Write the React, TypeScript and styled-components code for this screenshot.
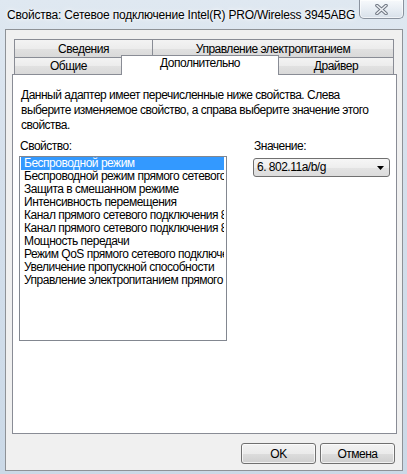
import React from 'react';
import styled, { createGlobalStyle } from 'styled-components';

const GlobalStyle = createGlobalStyle`
  html, body {
    margin: 0;
    padding: 0;
  }

  body {
    width: 407px;
    height: 474px;
    overflow: hidden;
    font-family: "Liberation Sans", Arial, sans-serif;
    font-size: 12px;
    letter-spacing: -0.5px;
    color: #000;
  }

  * {
    box-sizing: border-box;
  }
`;

const properties = [
  'Беспроводной режим',
  'Беспроводной режим прямого сетевого подключения',
  'Защита в смешанном режиме',
  'Интенсивность перемещения',
  'Канал прямого сетевого подключения 802.11a',
  'Канал прямого сетевого подключения 802.11b/g',
  'Мощность передачи',
  'Режим QoS прямого сетевого подключения',
  'Увеличение пропускной способности',
  'Управление электропитанием прямого сетевого подключения',
];

export default function App(): JSX.Element {
  return (
    <>
      <GlobalStyle />
      <Frame>
        <TitleBar>
          <Title>Свойства: Сетевое подключение Intel(R) PRO/Wireless 3945ABG</Title>
          <CloseButton aria-label="Закрыть">
            <svg width="13" height="11" viewBox="0 0 13 11">
              <path d="M2 1.5 L11 9.5 M11 1.5 L2 9.5" stroke="#6f7682" strokeWidth="3.6" strokeLinecap="round" fill="none" />
              <path d="M2 1.5 L11 9.5 M11 1.5 L2 9.5" stroke="#eef1f5" strokeWidth="1.6" strokeLinecap="round" fill="none" />
            </svg>
          </CloseButton>
        </TitleBar>
        <Client>
          <TabStrip>
            <TabRow>
              <Tab $width={139} $pad={2}>Сведения</Tab>
              <Tab $width={242} $pad={2}>Управление электропитанием</Tab>
            </TabRow>
            <TabRow>
              <Tab $width={109} $pad={1}>Общие</Tab>
              <ActiveTab>Дополнительно</ActiveTab>
              <Tab $width={116} $pad={1}>Драйвер</Tab>
            </TabRow>
          </TabStrip>
          <Panel>
            <Description>
              Данный адаптер имеет перечисленные ниже свойства. Слева
              <br />
              выберите изменяемое свойство, а справа выберите значение этого
              <br />
              свойства.
            </Description>
            <Columns>
              <PropertyColumn>
                <FieldLabel>Свойство:</FieldLabel>
                <ListBox>
                  {properties.map((name, i) => (
                    <ListItem key={name} $selected={i === 0}>
                      {name}
                    </ListItem>
                  ))}
                </ListBox>
              </PropertyColumn>
              <ValueColumn>
                <FieldLabel>Значение:</FieldLabel>
                <Combo>
                  <span>6. 802.11a/b/g</span>
                  <svg width="7" height="4" viewBox="0 0 7 4">
                    <path d="M0 0 H7 L3.5 4 Z" fill="#000" />
                  </svg>
                </Combo>
              </ValueColumn>
            </Columns>
          </Panel>
          <ButtonRow>
            <DialogButton>OK</DialogButton>
            <DialogButton>Отмена</DialogButton>
          </ButtonRow>
        </Client>
      </Frame>
    </>
  );
}

const Frame = styled.div`
  width: 407px;
  height: 474px;
  display: flex;
  flex-direction: column;
  padding: 0 4px 3px 5px;
  background: linear-gradient(180deg, #dfe8f1 0%, #d5e0ec 35%, #cbd9e7 100%);
`;

const TitleBar = styled.div`
  height: 29px;
  display: flex;
  align-items: flex-start;
  justify-content: space-between;
  flex-shrink: 0;
`;

const Title = styled.div`
  margin-left: 2px;
  padding-top: 8px;
  line-height: 15px;
  letter-spacing: -0.2px;
  white-space: nowrap;
  text-shadow: 0 0 6px rgba(255, 255, 255, 0.95), 0 0 3px rgba(255, 255, 255, 0.9);
`;

const CloseButton = styled.div`
  width: 45px;
  height: 19px;
  margin-right: -1px;
  display: flex;
  align-items: center;
  justify-content: center;
  border: 1px solid #8a929e;
  border-top: none;
  border-radius: 0 0 5px 5px;
  background: linear-gradient(180deg, rgba(255, 255, 255, 0.75) 0%, rgba(236, 240, 245, 0.7) 50%, rgba(214, 222, 232, 0.75) 100%);
  box-shadow: inset 0 0 0 1px rgba(255, 255, 255, 0.6);
`;

const Client = styled.div`
  flex: 1;
  display: flex;
  flex-direction: column;
  border: 1px solid #8e9297;
  background: #f0f0f0;
  padding: 9px 5px 6px 6px;
`;

const TabStrip = styled.div`
  margin: 0 3px 0 2px;
  display: flex;
  flex-direction: column;
`;

const TabRow = styled.div`
  display: flex;
  align-items: flex-start;
`;

const Tab = styled.div<{ $width: number; $pad: number }>`
  width: ${p => p.$width}px;
  height: ${p => (p.$pad === 2 ? 18 : 17)}px;
  padding-top: ${p => p.$pad}px;
  line-height: 15px;
  text-align: center;
  white-space: nowrap;
  border: 1px solid #898c95;
  border-bottom: none;
  background: linear-gradient(180deg, #f3f3f3 0%, #ececec 50%, #e1e1e1 52%, #d9d9d9 100%);

  & + & {
    margin-left: -1px;
  }
`;

const ActiveTab = styled.div`
  position: relative;
  z-index: 1;
  width: 158px;
  height: 20px;
  margin: -2px 0 -1px -2px;
  line-height: 15px;
  text-align: center;
  white-space: nowrap;
  border: 1px solid #898c95;
  border-bottom: none;
  background: #fff;

  & + ${Tab} {
    margin-left: -1px;
  }
`;

const Panel = styled.div`
  flex: 1;
  border: 1px solid #898c95;
  background: #fff;
  padding: 13px 6px 0 6px;
`;

const Description = styled.p`
  margin: 0 0 0 2px;
  line-height: 15px;
  white-space: nowrap;
`;

const Columns = styled.div`
  display: flex;
  align-items: flex-start;
  margin-top: 6px;
`;

const PropertyColumn = styled.div`
  width: 208px;
  display: flex;
  flex-direction: column;
`;

const ValueColumn = styled.div`
  width: 137px;
  margin-left: 26px;
  display: flex;
  flex-direction: column;
`;

const FieldLabel = styled.div`
  margin-left: 1px;
  line-height: 15px;
`;

const ListBox = styled.div`
  margin-top: 2px;
  height: 185px;
  border: 1px solid #828790;
  padding: 0 2px 0 1px;
  overflow: hidden;
`;

const ListItem = styled.div<{ $selected?: boolean }>`
  height: 13px;
  line-height: 13px;
  padding-left: 3px;
  white-space: nowrap;
  overflow: hidden;
  background: ${p => (p.$selected ? '#3399ff' : 'transparent')};
  color: ${p => (p.$selected ? '#fff' : '#000')};
`;

const Combo = styled.div`
  margin-top: 4px;
  height: 19px;
  display: flex;
  align-items: center;
  justify-content: space-between;
  padding: 0 5px 0 3px;
  line-height: 15px;
  border: 1px solid #707070;
  border-radius: 3px;
  background: linear-gradient(180deg, #f6f6f6 0%, #eeeeee 50%, #e3e3e3 52%, #dcdcdc 100%);
`;

const ButtonRow = styled.div`
  display: flex;
  justify-content: flex-end;
  gap: 4px;
  margin-top: 9px;
  padding-right: 2px;
`;

const DialogButton = styled.button`
  width: 75px;
  height: 21px;
  padding: 0;
  font: inherit;
  letter-spacing: inherit;
  color: #000;
  border: 1px solid #707070;
  border-radius: 3px;
  background: linear-gradient(180deg, #f2f2f2 0%, #ebebeb 50%, #dddddd 51%, #cfcfcf 100%);
  box-shadow: inset 0 0 0 1px rgba(255, 255, 255, 0.7);
`;
